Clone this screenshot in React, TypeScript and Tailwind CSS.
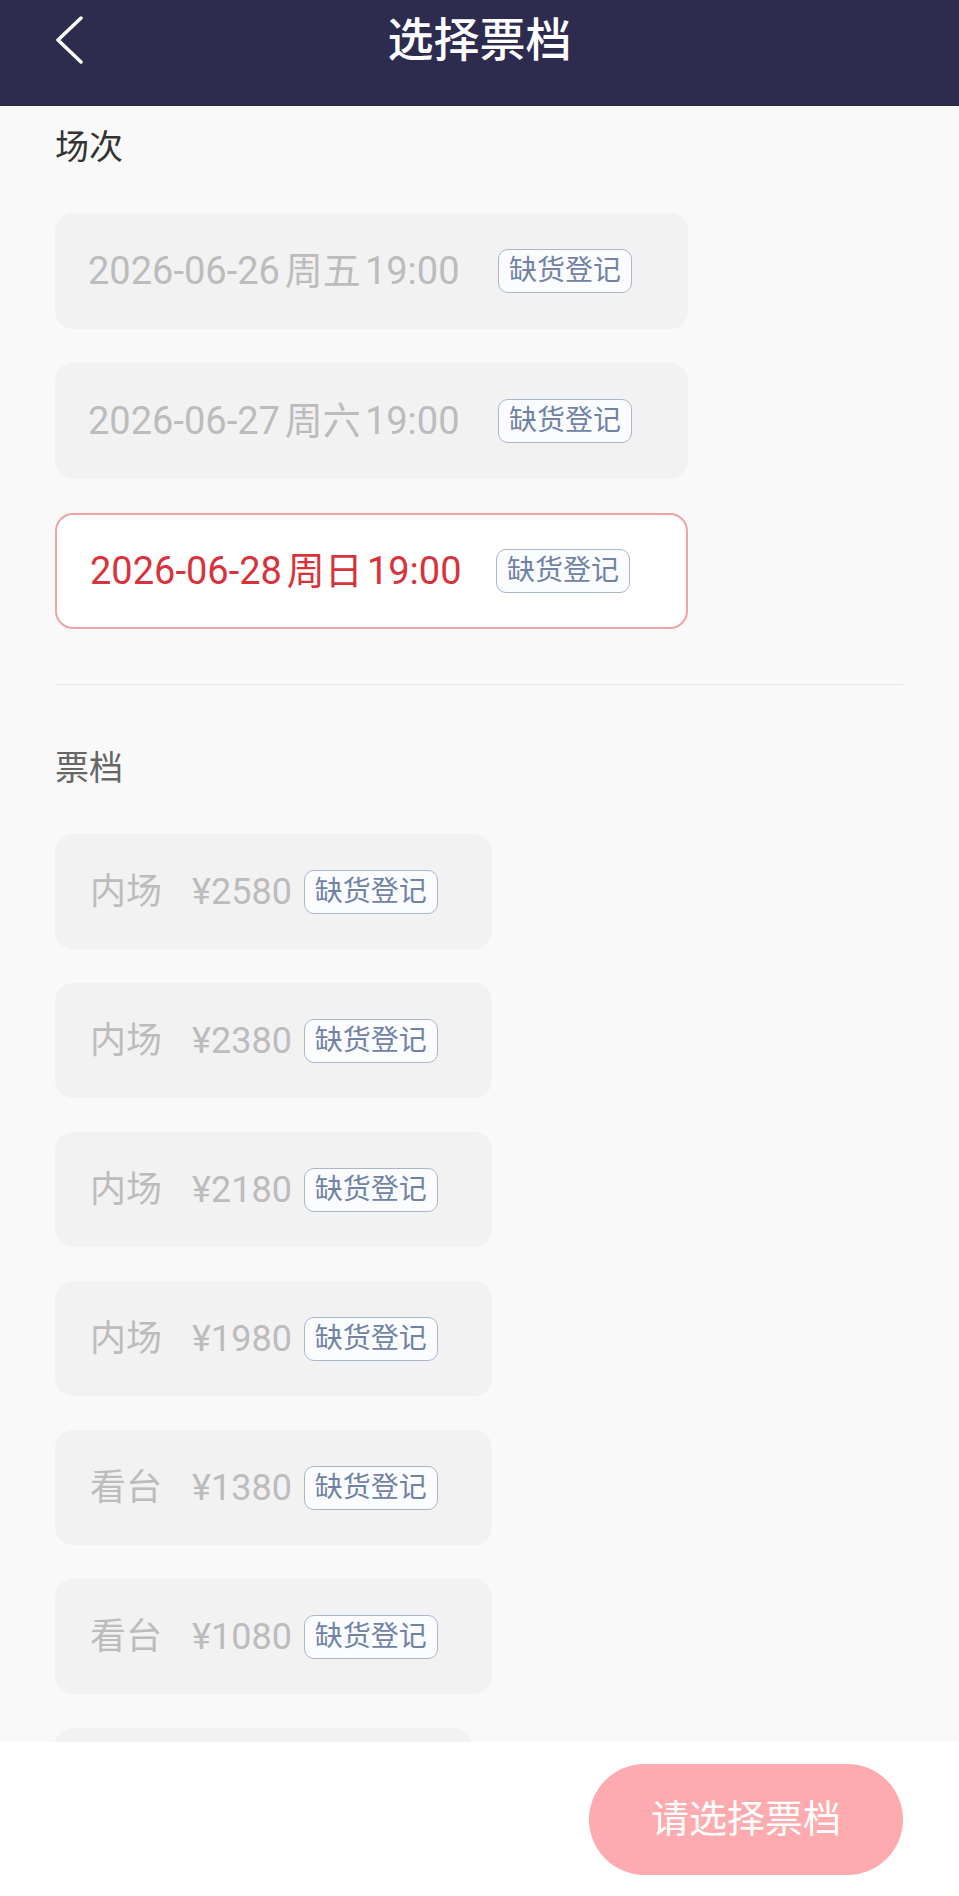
import React from "react";

const sessions = [
  { date: "2026-06-26", week: "周五", time: "19:00", selected: false },
  { date: "2026-06-27", week: "周六", time: "19:00", selected: false },
  { date: "2026-06-28", week: "周日", time: "19:00", selected: true },
];

const tiers = [
  { area: "内场", price: "¥2580" },
  { area: "内场", price: "¥2380" },
  { area: "内场", price: "¥2180" },
  { area: "内场", price: "¥1980" },
  { area: "看台", price: "¥1380" },
  { area: "看台", price: "¥1080" },
  { area: "看台", price: "¥880" },
];

const font = "font-['Roboto','Noto_Sans_CJK_SC',sans-serif]";

const StockBadge = () => (
  <span className="flex h-[44px] items-center rounded-[10px] border border-[#a9b5cb] bg-[#fbfcfe] px-[10px] text-[28px] leading-none text-[#7083a6]">
    缺货登记
  </span>
);

const App = () => {
  return (
    <div className={`flex h-[1896px] w-[959px] flex-col overflow-hidden bg-[#f9f9f9] ${font}`}>
      <header className="relative h-[106px] shrink-0 bg-[#2d2b4e]">
        <div className="flex h-[80px] items-center justify-center">
          <h1 className="text-[46px] font-medium leading-none text-white">选择票档</h1>
        </div>
        <button className="absolute left-[52px] top-[12px] flex h-[54px] w-[34px] items-center justify-center">
          <svg width="30" height="50" viewBox="0 0 30 50" fill="none">
            <polyline
              points="27,4 4,26 27,48"
              stroke="white"
              strokeWidth="3.5"
              strokeLinecap="round"
              strokeLinejoin="round"
            />
          </svg>
        </button>
      </header>

      <main className="flex-1 overflow-hidden px-[55px]">
        <section className="pt-[24px]">
          <h2 className="text-[34px] leading-none text-[#333333]">场次</h2>
          <div className="mt-[49px] flex flex-col gap-[34px]">
            {sessions.map((s) => (
              <div
                key={s.date}
                className={`flex h-[116px] w-[633px] items-center justify-between rounded-[18px] pl-[33px] pr-[56px] ${
                  s.selected
                    ? "border-2 border-[#f0a2a4] bg-white"
                    : "bg-[#f2f2f3]"
                }`}
              >
                <span
                  className={`text-[38px] leading-none ${
                    s.selected ? "text-[#d8333c]" : "text-[#bcbcbc]"
                  }`}
                >
                  {s.date}
                  <span className="ml-[5px] mr-[4px]">{s.week}</span>
                  {s.time}
                </span>
                <StockBadge />
              </div>
            ))}
          </div>
        </section>

        <div className="mt-[55px] h-px w-[848px] bg-[#e7e7e9]" />

        <section className="pt-[66px]">
          <h2 className="text-[34px] leading-none text-[#666666]">票档</h2>
          <div className="mt-[49px] flex flex-col items-start gap-[34px]">
            {tiers.map((t) => (
              <div
                key={t.price}
                className="flex h-[115px] shrink-0 items-center rounded-[18px] bg-[#f2f2f3] pl-[35px] pr-[54px]"
              >
                <span className="text-[36px] leading-none text-[#bcbcbc]">{t.area}</span>
                <span className="ml-[30px] text-[36px] leading-none text-[#bcbcbc]">{t.price}</span>
                <span className="ml-[12px]">
                  <StockBadge />
                </span>
              </div>
            ))}
          </div>
        </section>
      </main>

      <footer className="flex h-[154px] shrink-0 items-center justify-end bg-white pr-[56px]">
        <button className="flex h-[111px] w-[314px] items-center justify-center rounded-full bg-[#fdabae] text-[38px] leading-none text-white">
          请选择票档
        </button>
      </footer>
    </div>
  );
};

export default App;
